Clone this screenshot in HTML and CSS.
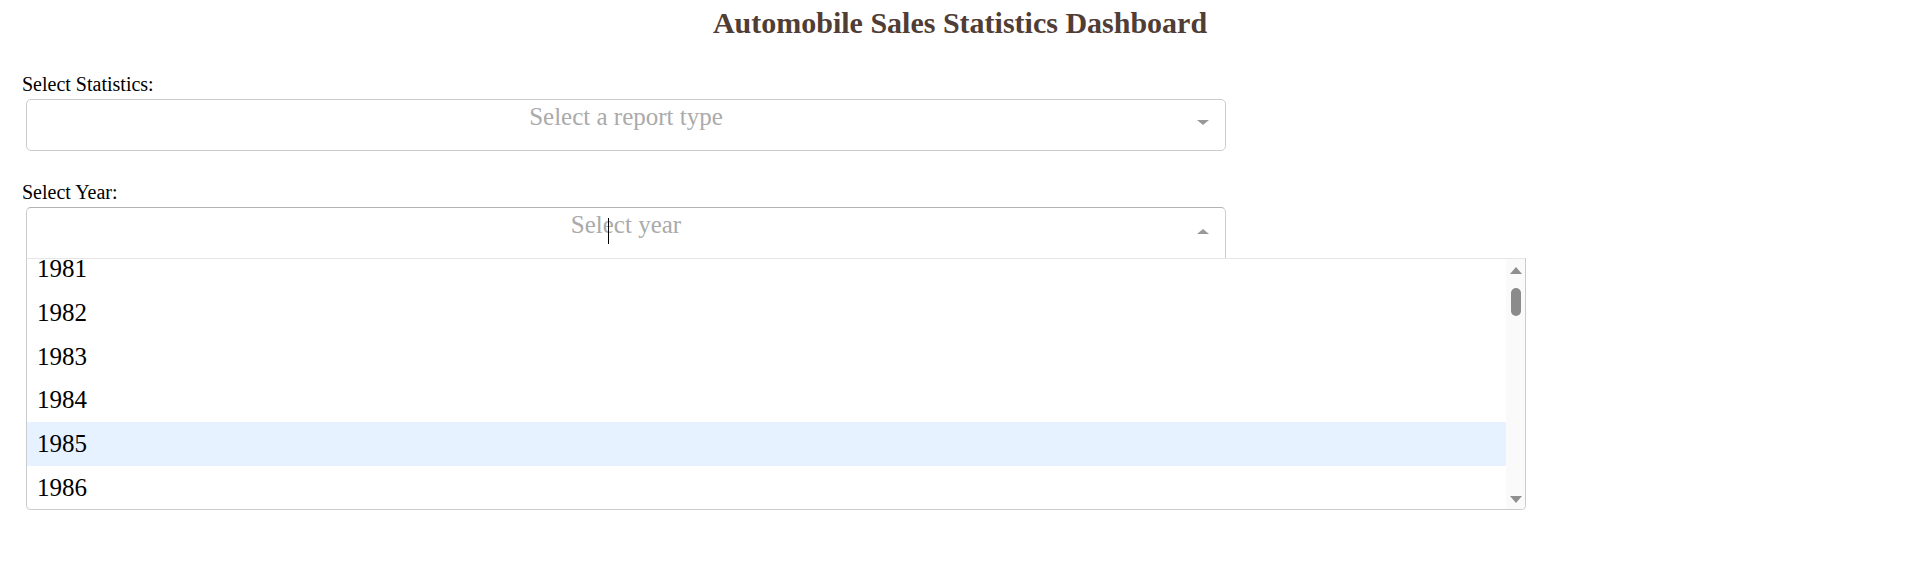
FILE: index.html
```html
<!DOCTYPE html>
<html>
<head>
<meta charset="utf-8">
<title>Automobile Sales Statistics Dashboard</title>
<link rel="stylesheet" href="styles.css">
</head>
<body>
<h1 class="title">Automobile Sales Statistics Dashboard</h1>

<div class="field field-stats">
  <label class="label">Select Statistics:</label>
  <div class="control">
    <span class="placeholder">Select a report type</span>
    <span class="arrow arrow-down"></span>
  </div>
</div>

<div class="field field-year">
  <label class="label">Select Year:</label>
  <div class="control control-open">
    <span class="placeholder">Select year</span>
    <span class="caret"></span>
    <span class="arrow arrow-up"></span>
  </div>
  <div class="menu">
    <div class="list">
      <div class="rows">
        <div class="option">1981</div>
        <div class="option">1982</div>
        <div class="option">1983</div>
        <div class="option">1984</div>
        <div class="option option-focused">1985</div>
        <div class="option">1986</div>
      </div>
    </div>
    <div class="scroll">
      <span class="sb-up"></span>
      <span class="sb-thumb"></span>
      <span class="sb-down"></span>
    </div>
  </div>
</div>
</body>
</html>
```

FILE: styles.css
```css
html, body {
  margin: 0;
  padding: 0;
  background: #ffffff;
}
body {
  font-family: "Liberation Serif", "Times New Roman", serif;
  color: #000;
}
.title {
  margin: 8px 0 0;
  padding-left: 11px;
  text-align: center;
  font-size: 30px;
  line-height: 30px;
  font-weight: bold;
  color: #503D36;
}
.field {
  padding-left: 22px;
}
.field-stats {
  margin-top: 36px;
}
.field-year {
  margin-top: 31px;
}
.label {
  display: block;
  font-size: 20px;
  line-height: 20px;
}
.control {
  box-sizing: border-box;
  margin-top: 5px;
  margin-left: 4px;
  width: 1200px;
  height: 52px;
  border: 1px solid #cccccc;
  border-radius: 5px;
  display: grid;
  background: #fff;
}
.control > * {
  grid-area: 1 / 1;
}
.control-open {
  height: 51px;
  border-color: #b3b3b3 #cccccc #d9d9d9;
  border-bottom: none;
  border-radius: 5px 5px 0 0;
}
.placeholder {
  align-self: start;
  justify-self: center;
  font-size: 25px;
  line-height: 34.5px;
  color: #aaaaaa;
  white-space: nowrap;
}
.caret {
  align-self: start;
  justify-self: center;
  margin-top: 10px;
  margin-right: 36px;
  width: 1px;
  height: 26px;
  background: #000;
}
.arrow {
  align-self: start;
  justify-self: end;
  margin-right: 16px;
  width: 0;
  height: 0;
  border-left: 6px solid transparent;
  border-right: 6px solid transparent;
}
.arrow-down {
  margin-top: 20px;
  border-top: 5px solid #999999;
}
.arrow-up {
  margin-top: 21px;
  border-bottom: 5px solid #999999;
}
.menu {
  box-sizing: border-box;
  margin-left: 4px;
  width: 1500px;
  height: 252px;
  border: 1px solid #cccccc;
  border-top-color: #e6e6e6;
  border-radius: 0 0 5px 5px;
  box-shadow: 0 1px 0 rgba(0, 0, 0, 0.06);
  display: flex;
  overflow: hidden;
  background: #fff;
}
.list {
  flex: 1;
  overflow: hidden;
}
.rows {
  margin-top: -12px;
}
.option {
  height: 43.75px;
  line-height: 43.75px;
  padding-left: 10px;
  font-size: 25px;
  color: #000;
}
.option-focused {
  background: #e6f2ff;
}
.scroll {
  width: 19px;
  background: #fafafa;
  display: flex;
  flex-direction: column;
  align-items: center;
}
.sb-up {
  margin-top: 8px;
  width: 0;
  height: 0;
  border-left: 6px solid transparent;
  border-right: 6px solid transparent;
  border-bottom: 7px solid #8f8f8f;
}
.sb-thumb {
  margin-top: 14px;
  width: 10px;
  height: 28px;
  border-radius: 5px;
  background: #8b8b8b;
}
.sb-down {
  margin-top: auto;
  margin-bottom: 6px;
  width: 0;
  height: 0;
  border-left: 6px solid transparent;
  border-right: 6px solid transparent;
  border-top: 7px solid #8f8f8f;
}
```
